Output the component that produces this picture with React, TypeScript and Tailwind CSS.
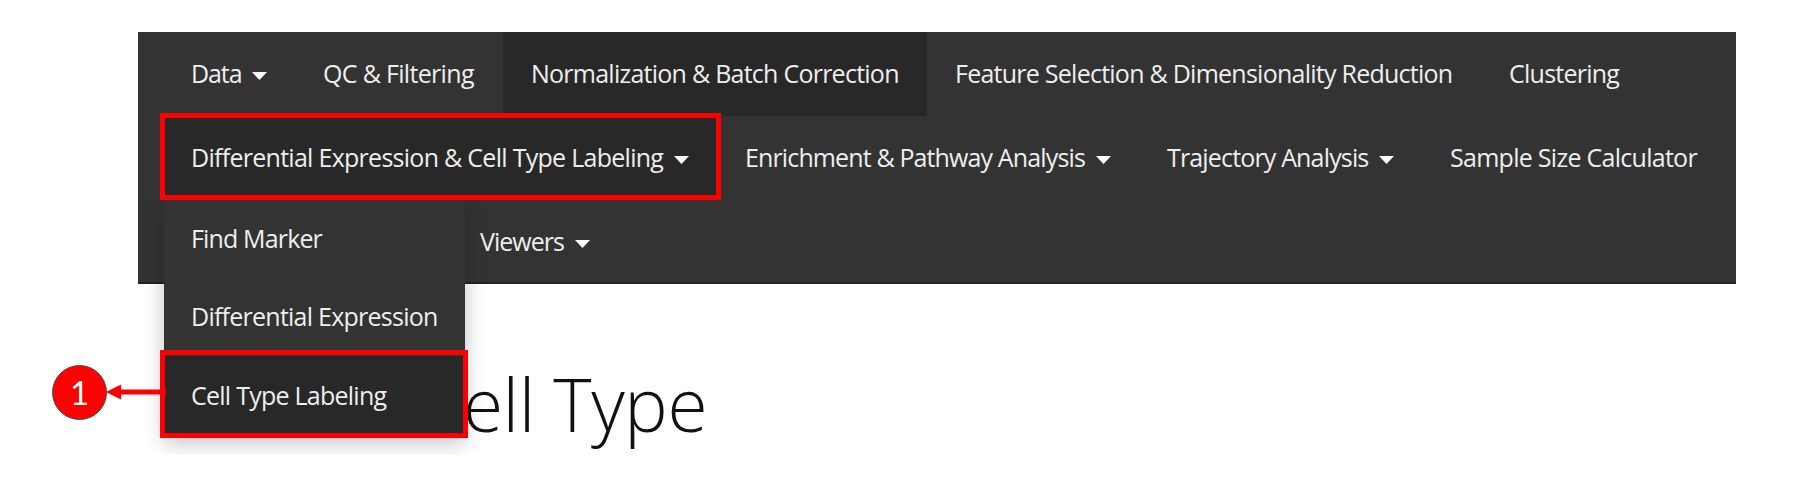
import React from "react";

function Caret() {
  return (
    <svg className="mt-1 ml-[11px] h-2 w-[15px] shrink-0" viewBox="0 0 15 8">
      <path d="M0 0H15L7.5 8Z" fill="#fff" />
    </svg>
  );
}

type ItemProps = { label: string; width: string; caret?: boolean; active?: boolean; tracking?: string };

function NavItem({ label, width, caret, active, tracking = "tracking-[-0.75px]" }: ItemProps) {
  return (
    <li className={`flex h-21 shrink-0 items-center pl-7 ${width} ${active ? "bg-[#282828]" : ""}`}>
      <span className={`whitespace-nowrap ${tracking}`}>{label}</span>
      {caret && <Caret />}
    </li>
  );
}

export default function App() {
  return (
    <div className="relative h-[480px] w-[1795px] overflow-hidden bg-white pt-8 pl-[138px] font-['Open_Sans',sans-serif] text-[25px] text-[#eee]">
      <nav className="h-[252px] w-[1598px] border-b-2 border-[#222] bg-[#333] pl-[25px]">
        <ul className="flex">
          <NavItem label="Data" width="w-[132px]" caret tracking="tracking-[-1.1px]" />
          <NavItem label="QC & Filtering" width="w-[208px]" tracking="tracking-[-0.68px]" />
          <NavItem label="Normalization & Batch Correction" width="w-[424px]" active />
          <NavItem label="Feature Selection & Dimensionality Reduction" width="w-[554px]" />
          <NavItem label="Clustering" width="w-[167px]" />
        </ul>
        <ul className="flex">
          <NavItem
            label="Differential Expression & Cell Type Labeling"
            width="w-[554px]"
            caret
            active
            tracking="tracking-[-0.72px]"
          />
          <NavItem label="Enrichment & Pathway Analysis" width="w-[422px]" caret tracking="tracking-[-0.87px]" />
          <NavItem label="Trajectory Analysis" width="w-[283px]" caret tracking="tracking-[-0.84px]" />
          <NavItem label="Sample Size Calculator" width="w-[303px]" tracking="tracking-[-0.72px]" />
        </ul>
        <ul className="flex pl-[289px]">
          <NavItem label="Viewers" width="w-[165px]" caret tracking="tracking-[-1px]" />
        </ul>
      </nav>
      <h1 className="mt-[70px] ml-[280px] text-[73px] leading-[100px] font-light tracking-[-0.4px] whitespace-nowrap text-[#111]">
        Cell Type
      </h1>
      <div className="absolute top-[200px] left-[138px] h-[254px] w-[400px] overflow-hidden tracking-[-0.75px]">
        <ul className="ml-[26px] h-[236px] w-[301px] bg-[#333] shadow-[0_7px_20px_rgba(0,0,0,0.24)]">
          <li className="flex h-[78px] items-center pl-[27px] tracking-[-0.85px]">Find Marker</li>
          <li className="flex h-[78px] items-center pl-[27px]">Differential Expression</li>
          <li className="flex h-20 items-center bg-[#282828] pl-[27px]">Cell Type Labeling</li>
        </ul>
      </div>
      <div className="absolute top-[113px] left-[160px] h-[87px] w-[561px] border-5 border-[#f00]" />
      <div className="absolute top-[350px] left-[160px] h-[88px] w-[308px] border-5 border-[#f00]" />
      <svg className="absolute top-[384px] left-[106px] h-4 w-[60px]" viewBox="0 0 60 16">
        <path d="M0 8L15 .5V5.5H60V10.5H15V15.5Z" fill="#f00" />
      </svg>
      <div className="absolute top-[365px] left-[52px] flex size-[55px] items-center justify-center rounded-full border border-[#445055] bg-[#f00] font-['Lato',sans-serif] text-[33px] leading-none text-white">
        1
      </div>
    </div>
  );
}
